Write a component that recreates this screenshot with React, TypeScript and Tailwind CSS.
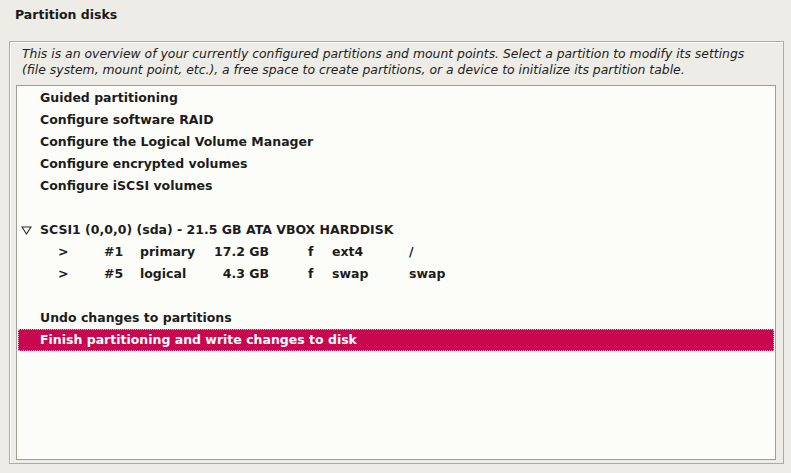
import React from "react";

const font = { fontFamily: '"DejaVu Sans", "Liberation Sans", sans-serif' };

function Row({ children, selected = false }: { children: React.ReactNode; selected?: boolean }) {
  return (
    <div
      className={
        "h-[22px] flex items-center text-[12.5px] font-bold " +
        (selected
          ? "bg-[#c8074f] text-white outline outline-1 outline-dotted outline-[#f3a6c4] -outline-offset-1"
          : "text-[#1c1c1c]")
      }
    >
      {children}
    </div>
  );
}

function Part({ n, type, size, fs, mp }: { n: string; type: string; size: string; fs: string; mp: string }) {
  return (
    <Row>
      <span className="ml-[40px] w-[46px]">&gt;</span>
      <span className="w-[36px]">{n}</span>
      <span className="w-[70px]">{type}</span>
      <span className="w-[59px] text-right">{size}</span>
      <span className="ml-[39px] w-[24px]">f</span>
      <span className="w-[77px]">{fs}</span>
      <span>{mp}</span>
    </Row>
  );
}

export default function App() {
  return (
    <div className="w-[791px] h-[473px] bg-[#edece6] overflow-hidden flex flex-col" style={font}>
      <div className="h-[41px] pl-[15px] pt-[6px] text-[12.5px] font-bold text-[#1a1a1a] leading-[18px]">
        Partition disks
      </div>
      <div className="ml-[9px] mr-[7px] h-[423px] border border-[#aeaba2] shadow-[inset_1px_1px_0_#ffffff] flex flex-col">
        <div className="pl-[12px] pt-[4px] text-[12.4px] italic leading-[16px] text-[#222]">
          <div>
            This is an overview of your currently configured partitions and mount points. Select a partition to modify its settings
          </div>
          <div>(file system, mount point, etc.), a free space to create partitions, or a device to initialize its partition table.</div>
        </div>
        <div className="mt-[7px] ml-[6px] mr-[7px] h-[375px] border border-[#a19e95] bg-[#fcfdf9] p-px flex flex-col">
          <Row><span className="pl-[22px]">Guided partitioning</span></Row>
          <Row><span className="pl-[22px]">Configure software RAID</span></Row>
          <Row><span className="pl-[22px]">Configure the Logical Volume Manager</span></Row>
          <Row><span className="pl-[22px]">Configure encrypted volumes</span></Row>
          <Row><span className="pl-[22px]">Configure iSCSI volumes</span></Row>
          <Row>{""}</Row>
          <Row>
            <svg width="11" height="9" viewBox="0 0 11 9" className="ml-[3px] mr-[8px]">
              <polygon points="1,1 10,1 5.5,8" fill="none" stroke="#2a2a2a" strokeWidth="1.1" />
            </svg>
            <span>SCSI1 (0,0,0) (sda) - 21.5 GB ATA VBOX HARDDISK</span>
          </Row>
          <Part n="#1" type="primary" size="17.2 GB" fs="ext4" mp="/" />
          <Part n="#5" type="logical" size="4.3 GB" fs="swap" mp="swap" />
          <Row>{""}</Row>
          <Row><span className="pl-[22px]">Undo changes to partitions</span></Row>
          <Row selected><span className="pl-[22px]">Finish partitioning and write changes to disk</span></Row>
        </div>
      </div>
    </div>
  );
}
